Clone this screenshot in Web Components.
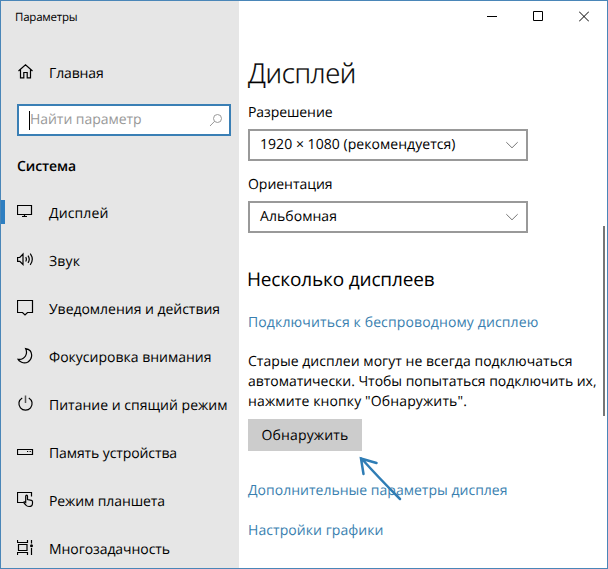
<!DOCTYPE html>
<html lang="ru">
<head>
<meta charset="utf-8">
<title>Параметры</title>
<style>
html,body{margin:0;height:100%;overflow:hidden}
body{font:14px/20px "Open Sans","Noto Sans",sans-serif;color:#000}
</style>
</head>
<body>
<settings-window></settings-window>
<script>
const define = (name, html, setup) => {
  const template = document.createElement('template');
  template.innerHTML = html;
  customElements.define(name, class extends HTMLElement {
    connectedCallback() {
      if (this.shadowRoot) return;
      this.attachShadow({mode: 'open'}).append(template.content.cloneNode(true));
      if (setup) setup(this, this.shadowRoot);
    }
  });
};

const icons = {
  home: '<path d="M1.5 8 8.5 1.8 15.5 8M3.5 6.5v8.3h3.3V9.5h3.4v5.3h3.3V6.500"/>',
  display: '<path d="M.5 2.5h14v9H.5zM7.5 11.500v2M5 13.500h5"/>',
  sound: '<path d="M.6 6.500h2.200L6 3v10.500L2.800 10.300H.6zM8.700 6.100q1.400 2.200 0 4.400M11 4.600q2.500 3.600 0 7.300M13.200 2.600q4.200 5.700 0 11.300"/>',
  note: '<path d="M.5 1.500h15v12h-5L8 16l-2.500-2.500h-5z"/>',
  moon: '<path d="M8.600 1.600C13 2.300 15 5 14.600 9.200 14 14.300 9 17.300 4.600 15.300 2.700 14.400 1.500 13.600 1 12.300c3.500.4 6-.8 7.500-3.300 1.300-2.200 1.400-4.700.1-7.400z"/>',
  power: '<path d="M5.200 2.900a6.600 6.600 0 1 0 6.600 0"/><path d="M8.500.5v7.500" stroke="#555" stroke-width="1.500"/>',
  storage: '<path d="M.5 6.500h15v5H.5z"/><path d="M10 8.500h1.200M12.600 8.500h1.200"/>',
  tablet: '<path d="M6.500 11.500h-6v-10h14v4"/><path d="M8.700 11.500V5.200q0-1 .9-1t.9 1v3.300l4 .9q1 .3 1 1.300v1.500q0 3.300-3.500 3.300-2 0-3.200-1.500L6.600 11.400q.5-1 1.500-.3z"/>',
  tasks: '<path d="M.5 1v2.500h10V1M1.500 5.500h8.500v6H1.500zM.5 16v-2.500h10V16M14.500 1v3.500M14.500 9v7"/><circle cx="14.500" cy="6.700" r="1.500" fill="#000" stroke="none"/>'
};

// Text run whose tracking is set so that it spans the given width.
define('ui-text', '<style>:host{display:inline-block;white-space:nowrap;text-rendering:geometricPrecision}</style><slot></slot>', el => {
  const w = +el.getAttribute('w');
  const natural = el.getBoundingClientRect().width;
  if (w && natural) el.style.letterSpacing = ((w - natural) / el.textContent.length).toFixed(3) + 'px';
});

define('ui-icon', '<style>:host{display:block;width:17px;height:17px}svg{display:block;fill:none;stroke:#000;stroke-width:1.2}</style><svg width="17" height="17"></svg>', (el, root) => {
  root.querySelector('svg').innerHTML = icons[el.getAttribute('name')] || '';
});

define('nav-item', `<style>
:host{display:flex;align-items:center;box-sizing:border-box;height:48px;padding:2px 0 0 16px;gap:15px;--mark:transparent;position:relative}
:host([active]){--mark:#2f7fc1}
:host::before{content:"";position:absolute;left:0;top:11px;width:4px;height:24px;background:var(--mark)}
.icon{margin-top:-5px}
</style><div class="icon"></div><slot></slot>`, (el, root) => {
  const icon = document.createElement('ui-icon');
  icon.setAttribute('name', el.getAttribute('icon'));
  root.querySelector('.icon').append(icon);
});

define('search-box', `<style>
:host{display:flex;align-items:center;justify-content:space-between;box-sizing:border-box;width:214px;height:32px;border:2px solid #3a7fb5;background:#fff;padding:0 6px 0 10px;color:#999}
div{display:flex;align-items:center}i{width:1px;height:19px;background:#000}
svg{fill:none;stroke:#999}
</style><div><i></i><slot></slot></div><svg width="14" height="14"><circle cx="8.500" cy="5.500" r="4"/><path d="M5.600 8.300 1 13"/></svg>`);

define('settings-sidebar', `<style>
:host{display:flex;flex-direction:column;width:238px;height:567px;background:#e6e6e6;overflow:hidden}
.title{flex:none;box-sizing:border-box;padding:6px 0 0 14px;font-size:11.500px;height:48px}
search-box{flex:none;margin:7px 0 0 16px}
.group{flex:none;box-sizing:border-box;padding:20px 0 0 16px;height:53px;font-weight:600}
nav-item{flex:none}
</style>
<div class="title"><ui-text w="62.500">Параметры</ui-text></div>
<nav-item icon="home"><ui-text w="54.500">Главная</ui-text></nav-item>
<search-box><ui-text w="111.500">Найти параметр</ui-text></search-box>
<div class="group"><ui-text w="59">Система</ui-text></div>
<nav-item icon="display" active><ui-text w="59.500">Дисплей</ui-text></nav-item>
<nav-item icon="sound"><ui-text w="31">Звук</ui-text></nav-item>
<nav-item icon="note"><ui-text w="171">Уведомления и действия</ui-text></nav-item>
<nav-item icon="moon"><ui-text w="162.500">Фокусировка внимания</ui-text></nav-item>
<nav-item icon="power"><ui-text w="178.500">Питание и спящий режим</ui-text></nav-item>
<nav-item icon="storage"><ui-text w="128">Память устройства</ui-text></nav-item>
<nav-item icon="tablet"><ui-text w="116">Режим планшета</ui-text></nav-item>
<nav-item icon="tasks"><ui-text w="121">Многозадачность</ui-text></nav-item>`);

define('window-controls', `<style>:host{display:flex;justify-content:flex-end;gap:36px;padding:10px 18px 0 0;height:21px}svg{display:block;fill:none;stroke:#000}</style>
<svg width="10" height="11"><path d="M0 5.500h10"/></svg>
<svg width="10" height="11"><path d="M.5.5h9v9h-9z"/></svg>
<svg width="10" height="11"><path d="M0 .5l10 10M10 .5l-10 10"/></svg>`);

define('select-box', `<style>
:host{display:flex;align-items:center;justify-content:space-between;box-sizing:border-box;width:280px;height:32px;border:2px solid #999;padding:0 8px 0 10px;background:#fff}
svg{fill:none;stroke:#777}
</style><slot></slot><svg width="12" height="8"><path d="M.3 1.200 6 6.800l5.700-5.600"/></svg>`);

define('push-button', `<style>:host{display:flex;align-items:center;justify-content:center;box-sizing:border-box;padding-top:1px;width:114px;height:32px;background:#ccc}</style><slot></slot>`);

define('text-link', `<style>:host{display:block;color:#3a7fb0;height:20px}</style><slot></slot>`);

define('display-page', `<style>
:host{display:block;flex:1;position:relative;background:#fff}
main{padding:0 0 0 9px;display:flex;flex-direction:column;align-items:flex-start}
h1{margin:21px 0 0;font-size:27.500px;line-height:40px;font-weight:340;height:40px;-webkit-text-stroke:.25px #000}
h2{margin:33px 0 0 -1px;font-size:19px;line-height:26px;font-weight:400;height:26px}
.l1{margin-top:9px}.l2{margin-top:13px}
.l1,.l2{height:20px}
select-box{margin-top:7px}
.a{margin-top:20px}.b{margin-top:29px}.c{margin-top:20px}
p{margin:20px 0 0;display:flex;flex-direction:column;align-items:flex-start;height:60px}
push-button{margin-top:7px}
.bar{position:absolute;right:2px;top:225px;width:2px;height:190px;background:#767676}
.arrow{position:absolute;left:119px;top:453px}
</style>
<window-controls></window-controls>
<main>
<h1><ui-text w="108">Дисплей</ui-text></h1>
<div class="l1"><ui-text w="84.500">Разрешение</ui-text></div>
<select-box><ui-text w="195.500">1920 × 1080 (рекомендуется)</ui-text></select-box>
<div class="l2"><ui-text w="84.500">Ориентация</ui-text></div>
<select-box><ui-text w="77">Альбомная</ui-text></select-box>
<h2><ui-text w="187.500">Несколько дисплеев</ui-text></h2>
<text-link class="a"><ui-text w="290.500">Подключиться к беспроводному дисплею</ui-text></text-link>
<p><ui-text w="324.500">Старые дисплеи могут не всегда подключаться</ui-text><ui-text w="348.500">автоматически. Чтобы попытаться подключить их,</ui-text><ui-text w="219">нажмите кнопку "Обнаружить".</ui-text></p>
<push-button><ui-text w="87">Обнаружить</ui-text></push-button>
<text-link class="b"><ui-text w="259.500">Дополнительные параметры дисплея</ui-text></text-link>
<text-link class="c"><ui-text w="135.500">Настройки графики</ui-text></text-link>
</main>
<div class="bar"></div>
<svg class="arrow" width="46" height="50" fill="none" stroke="#2f7db5" stroke-width="2.500" stroke-linecap="round"><path d="M3.500 4.500Q20 23 42 45M18.500 9 3 4.500 5.500 20"/></svg>`);

define('settings-window', `<style>
:host{display:flex;box-sizing:border-box;width:608px;height:569px;border:1px solid #4a86b8}
</style><settings-sidebar></settings-sidebar><display-page></display-page>`);
</script>
</body>
</html>
